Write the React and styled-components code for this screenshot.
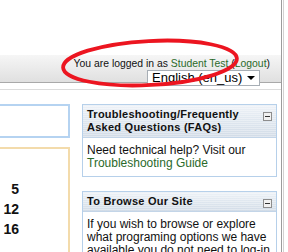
import React from 'react'
import styled, { createGlobalStyle } from 'styled-components'

const Global = createGlobalStyle`
  html, body { margin:0; padding:0; background:#fff; }
  body { width:288px; height:252px; overflow:hidden; font-family:"Liberation Sans", Arial, sans-serif; }
`

const Frame = styled.div`
  position:relative;
  width:284px;
  height:252px;
  overflow:hidden;
  border-right:1px solid #d2d2d2;
  box-sizing:border-box;
  padding-right:1px;
`
const Page = styled.div`
  height:100%;
  border-right:1px solid #9c9c9c;
  padding-top:55px;
  box-sizing:border-box;
`
const Band = styled.div`
  height:27px;
  background:linear-gradient(#f6f6f6, #ececec 45%, #e0e0e0);
  border-bottom:1px solid #a9a9a9;
  display:flex;
  flex-direction:column;
  align-items:flex-end;
`
const Login = styled.div`
  font-size:10.4px;
  line-height:12px;
  color:#111;
  padding:3px 11px 0 0;
  white-space:nowrap;
  a{ color:#2a6a2a; text-decoration:none; }
`
const Select = styled.div`
  width:113px;
  height:16px;
  box-sizing:border-box;
  margin-right:21px;
  background:#fff;
  border:1px solid #a7aeb5;
  display:flex;
  align-items:center;
  justify-content:space-between;
  padding:0 4px 0 4px;
  font-size:13px;
  color:#000;
  position:relative;
  z-index:1;
  span{ line-height:14px; }
`
const Arrow = styled.i`
  width:0; height:0;
  border-left:4px solid transparent;
  border-right:4px solid transparent;
  border-top:4px solid #000;
`
const Rule = styled.div`
  margin-top:6px;
  border-top:1px solid #dcdcdc;
`
const Content = styled.div`
  display:flex;
  gap:12px;
  padding-top:14px;
`
const Left = styled.div`
  width:70px;
  flex:none;
  display:flex;
  flex-direction:column;
  gap:9px;
`
const LeftBox = styled.div`
  border:2px solid ${p => p.$c};
  border-left:none;
  height:${p => p.$h}px;
  box-sizing:border-box;
  padding:30px 49px 0 0;
  text-align:right;
  font-weight:bold;
  font-size:14px;
  line-height:20px;
  color:#111;
`
const Right = styled.div`
  width:195px;
  flex:none;
  display:flex;
  flex-direction:column;
  gap:14px;
`
const Block = styled.div`
  border:1px solid #b6d0ea;
`
const Head = styled.div`
  display:flex;
  justify-content:space-between;
  align-items:flex-start;
  padding:3px 4px 3px 4px;
  background:
    repeating-linear-gradient(#ffffff00 0 1px, #ffffff55 1px 2px),
    linear-gradient(#eef2f7, #dfe7ef 50%, #d2dce7);
  border-bottom:1px solid #c3d5e8;
  font-size:11px;
  font-weight:bold;
  letter-spacing:0.25px;
  line-height:13px;
  color:#111;
`
const Min = styled.span`
  flex:none;
  width:9px;
  height:9px;
  margin-top:4px;
  box-sizing:border-box;
  border:1px solid #8d8d8d;
  background:#f1f1f1;
  display:flex;
  align-items:center;
  justify-content:center;
  &::after{ content:""; width:5px; height:1px; background:#333; }
`
const Body = styled.div`
  padding:6px 4px 6px 4px;
  font-size:12px;
  line-height:13px;
  color:#111;
  a{ color:#2a6a2a; text-decoration:none; }
`
const Mark = styled.svg`
  position:absolute;
  left:0; top:0;
  pointer-events:none;
  z-index:5;
`

export default function App() {
  return (
    <>
      <Global />
      <Frame>
        <Page>
          <Band>
            <Login>You are logged in as <a href="#">Student Test</a> (<a href="#">Logout</a>)</Login>
            <Select><span>English (en_us)</span><Arrow /></Select>
          </Band>
          <Rule />
          <Content>
            <Left>
              <LeftBox $c="#b5d3f1" $h={27} />
              <LeftBox $c="#f3dbab" $h={130}>5<br />12<br />16</LeftBox>
            </Left>
            <Right>
              <Block>
                <Head><span>Troubleshooting/Frequently Asked Questions (FAQs)</span><Min /></Head>
                <Body>Need technical help? Visit our <a href="#">Troubleshooting Guide</a></Body>
              </Block>
              <Block>
                <Head><span>To Browse Our Site</span><Min /></Head>
                <Body>If you wish to browse or explore what programing options we have available you do not need to log-in</Body>
              </Block>
            </Right>
          </Content>
        </Page>
        <Mark width="288" height="252">
          <ellipse cx="150" cy="63" rx="87" ry="22" transform="rotate(-3 150 63)" fill="none" stroke="#ec1520" strokeWidth="3.8" />
        </Mark>
      </Frame>
    </>
  )
}
